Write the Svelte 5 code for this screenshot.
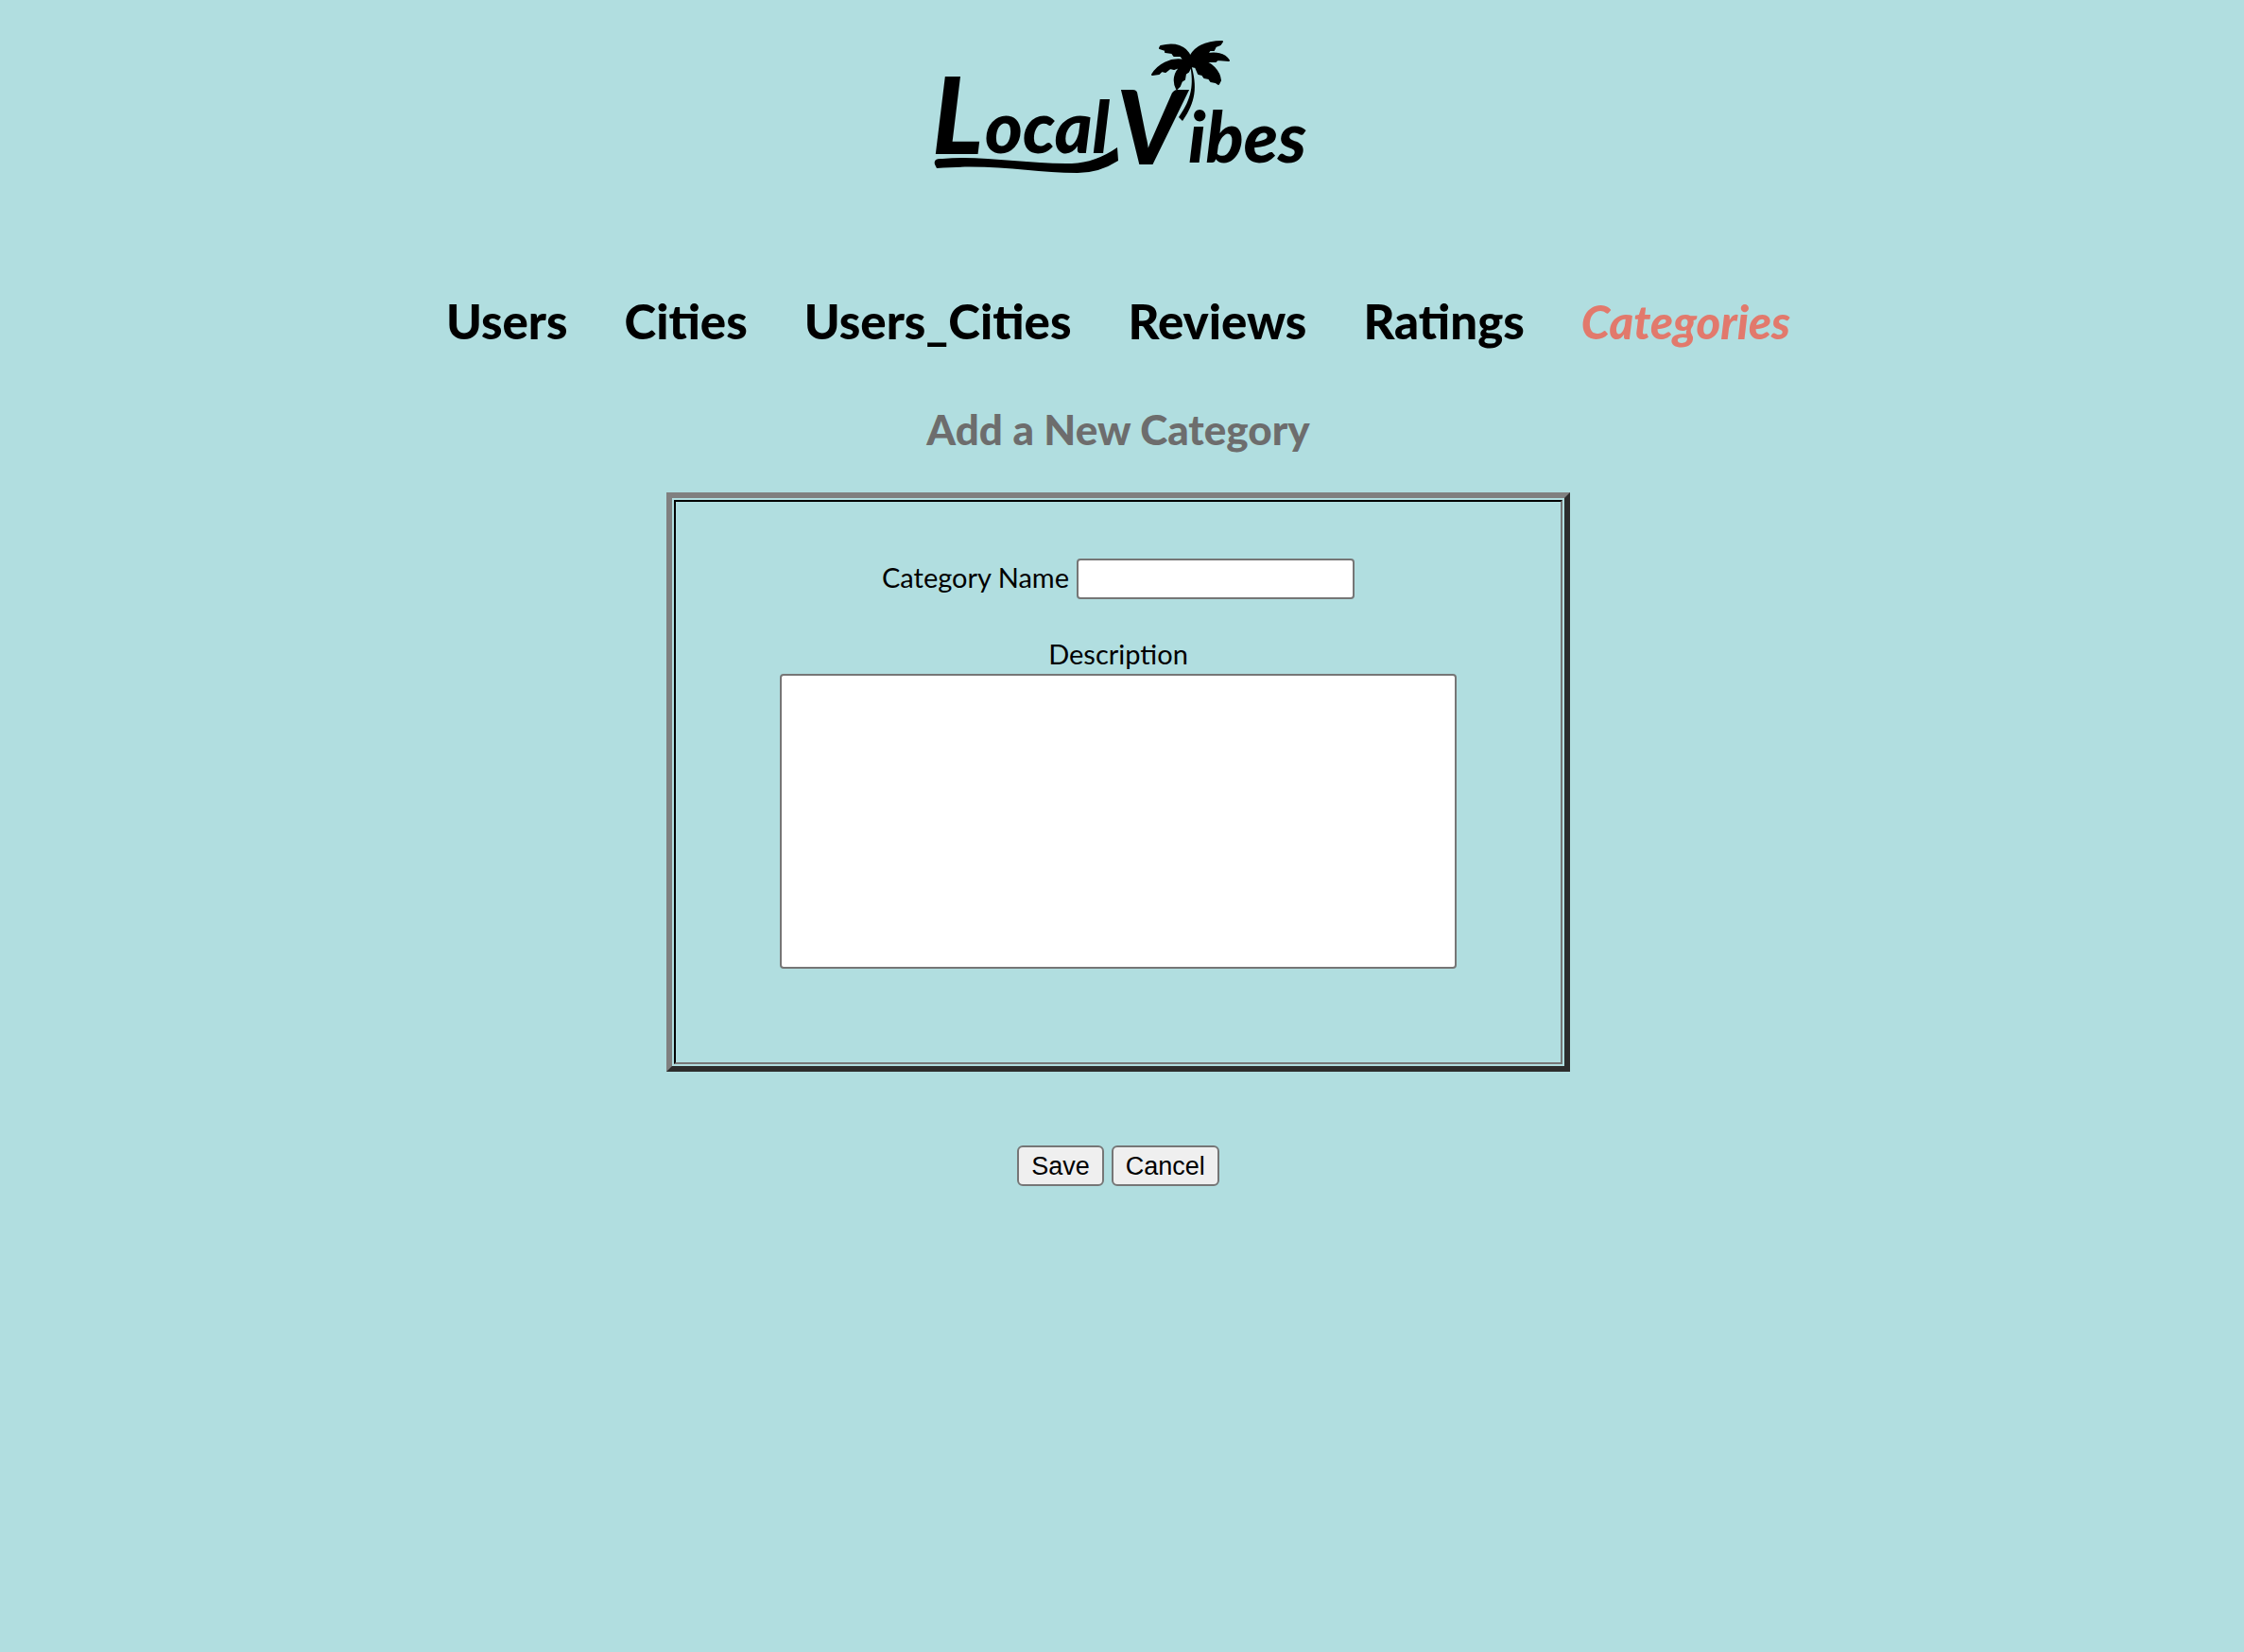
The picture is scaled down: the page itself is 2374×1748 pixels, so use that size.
<script>
  const links = ['Users', 'Cities', 'Users_Cities', 'Reviews', 'Ratings'];
  let name = $state('');
  let description = $state('');

  function reset() {
    name = '';
    description = '';
  }
</script>

<div class="page">
  <header>
    <svg class="logo" viewBox="0 0 440 180" role="img" aria-label="Local Vibes">
      <g class="lettering">
        <text class="initial" x="23" y="143">L</text>
        <text class="local" x="79" y="142">ocal</text>
        <text class="vee" x="218" y="154">V</text>
        <text class="vibes" x="294" y="152">ibes</text>
      </g>
      <path d="M26 154 Q24 147 34 148 C75 144 125 154 171 153 Q196 152 219 136 L220 150 Q200 163 177 163 C130 163 90 153 28 158 Z" />
      <path d="M297 48 C304 72 302 88 288 108 L284 104 C298 84 300 70 296 48 Z" />
      <path d="M296 40 C292 29 280 25 265 29 L264 31 L270 33 L270 35 L277 36 L279 39 L286 39 L290 44 C275 41 262 49 256 59 L263 58 L266 55 L270 56 L275 52 L279 53 L287 50 C279 57 278 66 282 74 L285 71 L287 66 L290 64 L291 58 L294 56 L297 50 L302 51 L305 58 L309 59 L311 62 L316 63 L318 66 L323 67 L326 69 L328 65 C327 55 318 46 309 45 L323 45 L325 43 L337 44 C332 36 323 36 314 37 L317 33 L321 33 L323 29 L328 27 L330 24 C314 24 302 29 296 40 Z" stroke="#000" stroke-width="2" stroke-linejoin="round" />
    </svg>
  </header>

  <nav>
    {#each links as link}
      <a href="#{link.toLowerCase()}">{link}</a>
    {/each}
    <a class="current" href="#categories" aria-current="page">Categories</a>
  </nav>

  <h1>Add a New Category</h1>

  <form onsubmit={(e) => e.preventDefault()}>
    <div class="frame">
      <div class="fields">
        <div class="row">
          <label for="name">Category Name</label>
          <input id="name" type="text" bind:value={name} />
        </div>
        <label class="above" for="description">Description</label>
        <textarea id="description" bind:value={description}></textarea>
      </div>
    </div>
    <div class="actions">
      <button type="submit">Save</button>
      <button type="button" onclick={reset}>Cancel</button>
    </div>
  </form>
</div>

<style>
  :global(body) {
    background: #b1dee0;
  }

  .page {
    box-sizing: border-box;
    min-height: 100vh;
    padding: 20px 8px 40px 0;
    font-family: Lato, sans-serif;
    color: #000;
  }

  header {
    display: flex;
    justify-content: center;
  }

  .logo {
    width: 440px;
    height: 180px;
  }

  .lettering {
    font-weight: 900;
    font-style: italic;
  }

  .initial {
    font-size: 112px;
  }

  .local {
    font-size: 76px;
  }

  .vee {
    font-size: 108px;
  }

  .vibes {
    font-size: 74px;
  }

  nav {
    display: flex;
    flex-wrap: wrap;
    justify-content: center;
    gap: 0 60px;
    margin-top: 110px;
    font-size: 51px;
    line-height: 60px;
    font-weight: 900;
  }

  a {
    color: inherit;
    text-decoration: none;
  }

  .current {
    color: #e2796c;
    font-size: 49px;
    font-style: italic;
  }

  h1 {
    margin: 58px 0 41px;
    text-align: center;
    font-size: 44px;
    line-height: 52px;
    font-weight: 900;
    color: #6d6d6d;
  }

  form {
    display: flex;
    flex-direction: column;
    align-items: center;
  }

  .frame {
    box-sizing: border-box;
    width: 100%;
    max-width: 956px;
    padding: 2px;
    border: 6px solid;
    border-color: #808080 #2c2c2c #2c2c2c #808080;
  }

  .fields {
    display: flex;
    flex-direction: column;
    align-items: center;
    padding: 60px 20px 99px;
    border: 2px solid;
    border-color: #000 #767676 #767676 #000;
    font-size: 29px;
    line-height: 36px;
  }

  .row {
    display: flex;
    align-items: flex-start;
    gap: 8px;
    margin-bottom: 40px;
  }

  .row label {
    line-height: 40px;
  }

  input,
  textarea {
    box-sizing: border-box;
    border: 2px solid #767676;
    border-radius: 4px;
    background: #fff;
    font-family: "Liberation Sans", Arial, sans-serif;
    font-size: 27px;
  }

  input {
    width: 294px;
    height: 43px;
    padding: 2px 4px;
  }

  .above {
    margin-bottom: 3px;
  }

  textarea {
    width: 100%;
    max-width: 716px;
    height: 312px;
    padding: 4px;
    resize: none;
  }

  .actions {
    display: flex;
    gap: 8px;
    margin-top: 78px;
  }

  button {
    height: 43px;
    padding: 0 13px;
    border: 2px solid #767676;
    border-radius: 6px;
    background: #efefef;
    color: #000;
    font-family: "Liberation Sans", Arial, sans-serif;
    font-size: 27px;
    line-height: 30px;
  }
</style>
